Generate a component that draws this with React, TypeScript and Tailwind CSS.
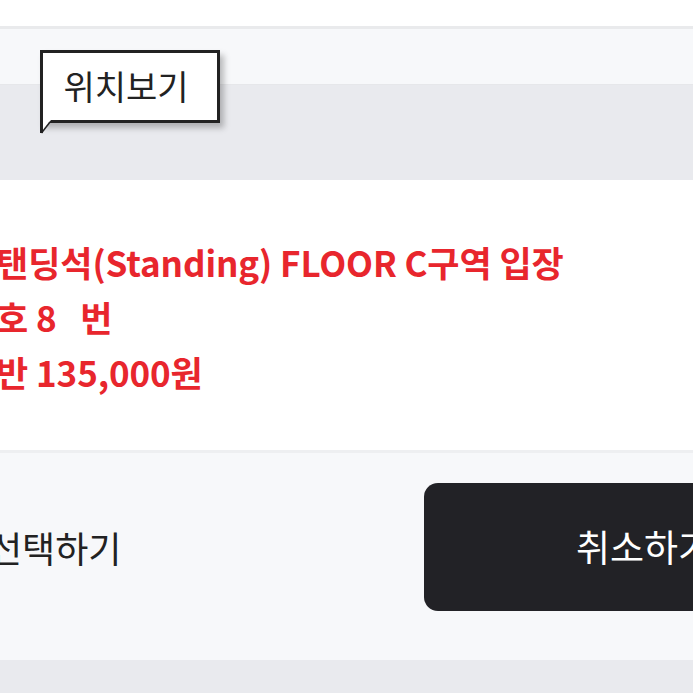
import React from "react";

const font = { fontFamily: '"Noto Sans CJK KR", "Noto Sans", sans-serif' };

export default function App() {
  return (
    <div className="w-[693px] h-[693px] overflow-hidden bg-white relative" style={font}>
      <div className="h-[26px] bg-white" />
      <div className="h-[3px] bg-[#e9eaec]" />
      <div className="h-[56px] bg-[#f7f8fa] border-b border-[#e6e7ea]" />
      <div className="h-[95px] bg-[#e9eaee]" />
      <div className="h-[270px] bg-white flex flex-col justify-center">
        <div className="ml-[-36px] text-[#e8262d] font-bold text-[35px] leading-[55px] whitespace-pre tracking-[-0.1px] pt-[2px]">
          <div>스탠딩석(Standing) FLOOR C구역 입장</div>
          <div>번호 8   번</div>
          <div>일반 135,000원</div>
        </div>
      </div>
      <div className="h-[3px] bg-[#eeeff1]" />
      <div className="h-[207px] bg-[#f7f8fa] flex items-center justify-between pb-[20px]">
        <div className="ml-[-11px] text-[36px] text-[#222] whitespace-nowrap">선택하기</div>
        <div className="w-[440px] h-[128px] shrink-0 mr-[-171px] rounded-[14px] bg-[#222226] flex items-center justify-center text-white text-[37px] whitespace-nowrap">
          취소하기
        </div>
      </div>
      <div className="h-[40px] bg-[#e9eaee]" />

      <div className="absolute left-[40px] top-[50px]">
        <div className="relative w-[180px] h-[73px] bg-white border-[3px] border-[#222] shadow-[4px_5px_6px_rgba(0,0,0,0.25)] flex items-center justify-center text-[34px] text-[#222]">
          <span className="mt-[-2px] ml-[-8px]">위치보기</span>
        </div>
        <svg className="absolute left-0 top-[70px]" width="14" height="16" viewBox="0 0 14 16">
          <polygon points="1.5,0 11,0 1.5,12" fill="#fff" />
          <line x1="1.5" y1="0" x2="1.5" y2="13" stroke="#222" strokeWidth="3" />
          <line x1="1.5" y1="13" x2="10" y2="2" stroke="#222" strokeWidth="1.5" />
        </svg>
      </div>
    </div>
  );
}
